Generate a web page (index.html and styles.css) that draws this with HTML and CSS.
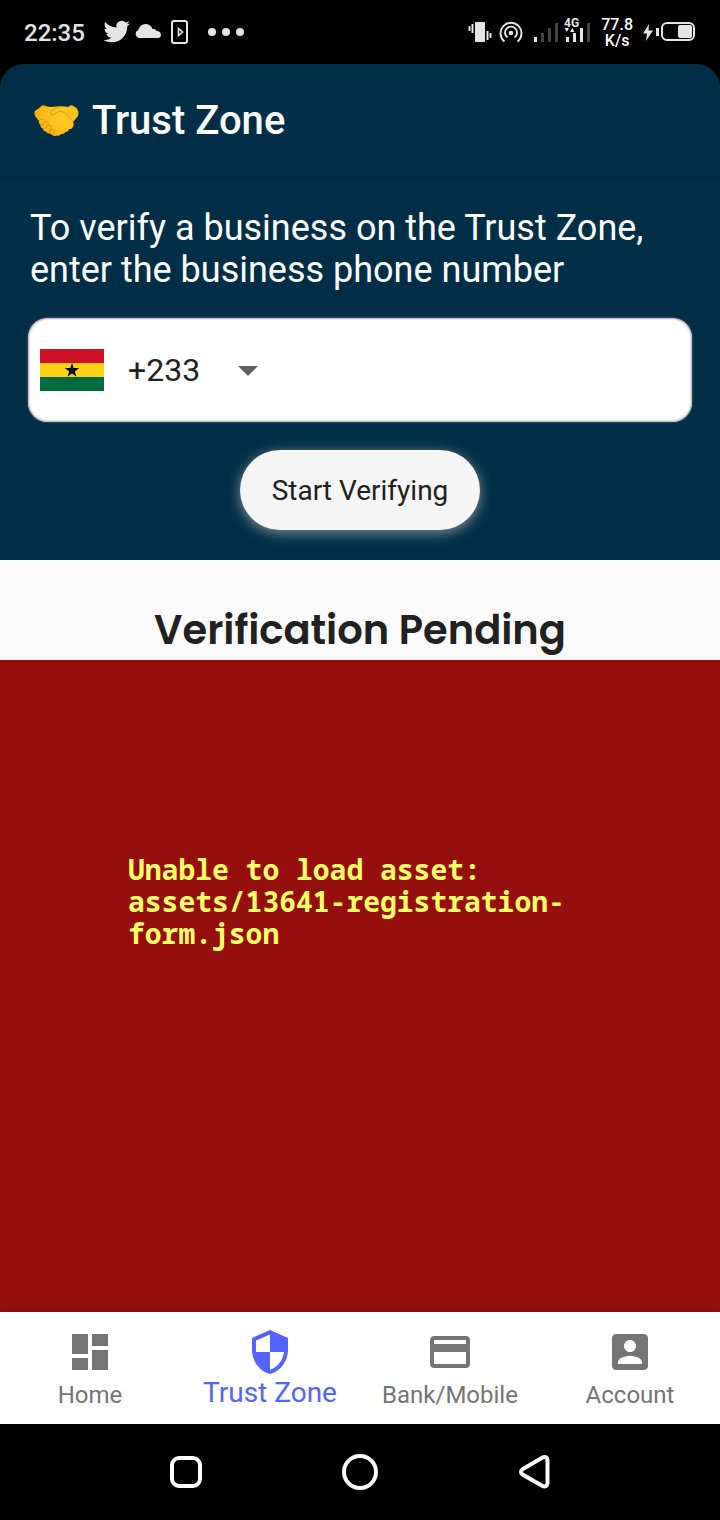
FILE: index.html
```html
<!DOCTYPE html>
<html lang="en">
<head>
<meta charset="utf-8">
<meta name="viewport" content="width=device-width, initial-scale=1">
<title>Trust Zone</title>
<link rel="stylesheet" href="styles.css">
</head>
<body>
<div class="screen">
  <div class="status">
    <div class="status-left">
      <span class="clock">22:35</span>
      <svg width="142" height="28" viewBox="103 18 142 28" fill="#e4e4e4" aria-hidden="true">
        <path transform="translate(103.500 18.400) scale(1.100)" d="M23.950 4.570a10 10 0 0 1-2.820.77 4.960 4.960 0 0 0 2.160-2.720c-.95.550-2 .960-3.130 1.180a4.920 4.920 0 0 0-8.380 4.480C7.690 8.090 4.070 6.130 1.640 3.160a4.820 4.820 0 0 0-.67 2.480c0 1.710.870 3.210 2.190 4.100a4.900 4.900 0 0 1-2.230-.62v.06a4.920 4.920 0 0 0 3.950 4.830 5 5 0 0 1-2.210.080 4.940 4.940 0 0 0 4.600 3.420A9.870 9.870 0 0 1 0 19.540a14 14 0 0 0 7.550 2.210c9.050 0 14-7.500 14-13.980 0-.21 0-.42-.02-.63a9.940 9.940 0 0 0 2.460-2.550z"/>
        <path d="M138.500 38a4.300 4.300 0 0 1-.3-8C139.500 26 142 24 145.500 24c3.500 0 6 2.300 7 5 1.400-.4 3.200.2 3.900 1.700 2.600.2 4.600 1.800 4.600 4 0 2-1.400 3.300-3.200 3.300z"/>
        <rect x="172" y="21" width="15" height="22" rx="2" fill="none" stroke="#e4e4e4" stroke-width="2"/>
        <path d="M178.500 28.500v7l4-3.500z" fill="none" stroke="#e4e4e4" stroke-width="1.600"/>
        <circle cx="212" cy="32" r="4"/><circle cx="226" cy="32" r="4"/><circle cx="240" cy="32" r="4"/>
      </svg>
    </div>
    <div class="status-right">
      <svg width="124" height="32" viewBox="469 16 124 32" aria-hidden="true">
        <g fill="#e4e4e4">
          <rect x="476" y="22" width="10" height="20" rx="1"/>
          <rect x="472.500" y="24" width="2" height="9"/><rect x="469.500" y="26" width="2" height="5"/>
          <rect x="487.500" y="31" width="2" height="9"/><rect x="490.500" y="33" width="2" height="5"/>
          <circle cx="512" cy="33" r="2.300"/>
          <rect x="535" y="37" width="3" height="5"/>
          <rect x="567" y="37" width="3" height="5"/><rect x="574" y="33" width="3" height="9"/><rect x="581" y="28" width="3" height="14"/>
          <path d="M565.500 28h4.500l-2.200 4zM571 32h4.500l-2.200-4z"/>
        </g>
        <g fill="none" stroke="#e4e4e4" stroke-width="1.900">
          <path d="M505.500 41.500a10.500 10.500 0 1 1 13 0M508.500 37.500a6 6 0 1 1 7 0"/>
        </g>
        <g fill="#444"><rect x="542" y="33" width="3" height="9"/><rect x="549" y="28" width="3" height="14"/><rect x="556" y="23" width="3" height="19"/><rect x="588" y="23" width="3" height="19"/></g>
        <text class="network" x="565" y="27">4G</text>
      </svg>
      <span class="speed">77.8<br>K/s</span>
      <svg width="54" height="22" viewBox="642 21 54 22" fill="#e4e4e4" aria-hidden="true">
        <path d="M649 24l-6 9.500h4l-1 7.500 7-10.500h-4.500z"/>
        <path d="M656 28h3v8h-3z"/>
        <rect x="662" y="23" width="32" height="17" rx="5" fill="none" stroke="#e4e4e4" stroke-width="2"/>
        <rect x="678" y="25" width="14" height="13" rx="2"/>
      </svg>
    </div>
  </div>

  <header class="appbar">
    <svg class="shake" width="46" height="34" viewBox="0 0 46 34" aria-hidden="true">
      <defs><radialGradient id="skin" cx=".65" cy=".4" r=".7"><stop offset="0" stop-color="#ffca28"/><stop offset=".6" stop-color="#ffc01d"/><stop offset="1" stop-color="#f9a80c"/></radialGradient></defs>
      <path fill="url(#skin)" d="M4.500 4.500 8 1.500Q10 .8 11.500 2q5 1.500 10.500.500 6-.8 12.500.500Q36 .8 38.500 1.500q3.500 1.500 5.500 5 1 3 0 5.500l-5 6q1.500 3.500-.5 5.500-1 2-3.500 1.500-.5 3-3.500 3-1 2.500-4.500 2-1.500 2.500-4.500 1.500-2 1.500-4.500-.5l-2-1.500q-3 .5-4-2-3 0-3-3-3-.500-2.500-3.500-2-1.500-1.500-4L1 12Q-.5 8 1.500 6.500z"/>
      <path fill="none" stroke="#dc9208" stroke-width=".9" stroke-linecap="round" stroke-linejoin="round" d="M24 3.200q-5 1.300-8 5.300.2 2.800 3.500 2 3-1.500 6-3.500 4 .5 7 3.500l6.500 7M5 17q2-3 4.500-2 2 1.500 0 4l-2.500 2M8 21q3-4.500 5.500-3.500 2 1.500 0 4.500l-2 2M11.500 24.500q3-4 5-3 2 1.500 0 4.500l-1.500 2M16 28q2-3.500 4-2.500 1.500 1.500-.5 5"/>
    </svg>
    <h1 class="title">Trust Zone</h1>
  </header>

  <form class="verify">
    <label class="prompt" for="phone">To verify a business on the Trust Zone, enter the business phone number</label>
    <div class="field">
      <svg class="flag" width="64" height="42" viewBox="0 0 64 42" aria-hidden="true">
        <path fill="#ce1126" d="M0 0h64v14H0z"/><path fill="#fcd116" d="M0 14h64v14H0z"/><path fill="#006b3f" d="M0 28h64v14H0z"/>
        <path d="M32 14l1.700 5.100h5.500l-4.400 3.300 1.700 5.200-4.500-3.200-4.500 3.200 1.700-5.200-4.400-3.300h5.500z"/>
      </svg>
      <div class="code-wrap">
        <select class="code" aria-label="Country code"><option>+233</option></select>
        <svg class="caret" width="20" height="12" viewBox="0 0 20 12" aria-hidden="true"><path fill="#616161" d="M0 2h20L10 12z"/></svg>
      </div>
      <input class="phone" id="phone" type="tel">
    </div>
    <button class="start" type="button">Start Verifying</button>
  </form>

  <main class="pending">
    <h2 class="pending-title">Verification Pending</h2>
    <p class="error">Unable to load asset: assets/13641-registration-form.json</p>
  </main>

  <nav class="tabs">
    <a class="tab" href="#home">
      <svg width="48" height="48" viewBox="0 0 24 24" aria-hidden="true"><path d="M3 13h8V3H3v10zm0 8h8v-6H3v6zm10 0h8V11h-8v10zm0-18v6h8V3h-8z"/></svg>
      <span>Home</span>
    </a>
    <a class="tab active" href="#trust" aria-current="page">
      <svg width="48" height="48" viewBox="0 0 24 24" aria-hidden="true"><path d="M12 1L3 5v6c0 5.550 3.840 10.740 9 12 5.160-1.260 9-6.450 9-12V5l-9-4zm0 10.990h7c-.53 4.120-3.280 7.790-7 8.940V12H5V6.300l7-3.110v8.800z"/></svg>
      <span>Trust Zone</span>
    </a>
    <a class="tab" href="#bank">
      <svg width="48" height="48" viewBox="0 0 24 24" aria-hidden="true"><path d="M20 4H4c-1.110 0-1.990.890-1.990 2L2 18c0 1.110.890 2 2 2h16c1.110 0 2-.89 2-2V6c0-1.110-.89-2-2-2zm0 14H4v-6h16v6zm0-10H4V6h16v2z"/></svg>
      <span>Bank/Mobile</span>
    </a>
    <a class="tab" href="#account">
      <svg width="48" height="48" viewBox="0 0 24 24" aria-hidden="true"><path d="M3 5v14c0 1.100.890 2 2 2h14c1.100 0 2-.9 2-2V5c0-1.100-.9-2-2-2H5c-1.110 0-2 .9-2 2zm12 4c0 1.660-1.340 3-3 3s-3-1.340-3-3 1.340-3 3-3 3 1.340 3 3zm-9 8c0-2 4-3.100 6-3.100s6 1.100 6 3.100v1H6v-1z"/></svg>
      <span>Account</span>
    </a>
  </nav>

  <div class="sysnav">
    <button class="sys" type="button" aria-label="Recent apps"><svg width="40" height="40" viewBox="0 0 40 40"><rect x="6" y="6" width="28" height="28" rx="7"/></svg></button>
    <button class="sys" type="button" aria-label="Home screen"><svg width="40" height="40" viewBox="0 0 40 40"><circle cx="20" cy="20" r="16"/></svg></button>
    <button class="sys" type="button" aria-label="Back"><svg width="40" height="40" viewBox="0 0 40 40"><path d="M8.500 17.300 L28.500 5.500 Q33 4 33.500 8 V31 Q33 35.500 28.500 34 L8.500 22.500 Q5.500 19.900 8.500 17.300z"/></svg></button>
  </div>
</div>
</body>
</html>
```
FILE: styles.css
```css
* { box-sizing: border-box; }

body {
  margin: 0;
  background: #000;
  color: #212121;
  font-family: Roboto, "Liberation Sans", sans-serif;
}

h1, h2, p { margin: 0; }
svg { display: block; flex: none; }

.screen {
  display: flex;
  flex-direction: column;
  min-height: 100vh;
}

.status {
  display: flex;
  align-items: center;
  justify-content: space-between;
  height: 64px;
  padding: 0 24px;
  color: #e4e4e4;
  font-weight: 500;
}
.status-left { display: flex; align-items: center; gap: 18px; }
.status-right { display: flex; align-items: center; gap: 9px; }
.clock { padding-top: 2px; font-size: 24px; line-height: 32px; }
.speed { padding-top: 2px; font-size: 16px; line-height: 16px; text-align: center; color: #fff; }
.network { font: 700 12px Roboto, sans-serif; fill: #e4e4e4; }

.appbar {
  position: relative;
  display: flex;
  align-items: center;
  gap: 12px;
  height: 112px;
  padding: 2px 34px 0;
  border-radius: 24px 24px 0 0;
  background: #002e47;
  color: #fff;
  box-shadow: 0 2px 4px rgba(0, 0, 0, .2);
}
.title { font-size: 40px; line-height: 48px; font-weight: 500; }

.verify {
  display: flex;
  flex-direction: column;
  gap: 28px;
  padding: 30px 28px;
  background: #002e47;
}
.prompt {
  margin-bottom: -1px;
  padding: 1px 2px 0;
  color: #fff;
  font-size: 36px;
  line-height: 42px;
}
.field {
  display: flex;
  align-items: center;
  gap: 24px;
  height: 104px;
  padding: 0 12px;
  border-radius: 20px;
  background: #fff;
  box-shadow: 0 0 2px #8a979f, inset 0 0 2px 1px #aaa;
}
.code-wrap {
  display: grid;
  grid-template-columns: 130px;
  align-items: center;
}
.code, .caret { grid-area: 1 / 1; }
.caret { justify-self: end; pointer-events: none; }
.code {
  appearance: none;
  width: 100%;
  padding: 0;
  border: 0;
  background: transparent;
  color: #212121;
  font: 32px/40px Roboto, sans-serif;
}
.phone {
  flex: 1;
  min-width: 0;
  border: 0;
  outline: 0;
  background: transparent;
  color: #212121;
  font: 32px/40px Roboto, sans-serif;
}
.start {
  align-self: center;
  width: 240px;
  height: 80px;
  padding: 2px 0 0;
  border: 0;
  border-radius: 40px;
  background: #f5f5f5;
  box-shadow: 0 3px 14px rgba(255, 240, 225, .5);
  color: #212121;
  font: 28px/32px Roboto, sans-serif;
}

.pending {
  display: flex;
  flex: 1;
  flex-direction: column;
  background: #fafafa;
}
.pending-title {
  padding: 40px 0 0;
  font-family: Poppins, Inter, sans-serif;
  font-size: 40px;
  line-height: 60px;
  font-weight: 600;
  text-align: center;
}
.error {
  flex: 1;
  padding: 193px 128px;
  background: #960f0f;
  color: #ff6;
  font: 700 28px/32px "Droid Sans Mono", "Noto Sans Mono", "DejaVu Sans Mono", monospace;
}

.tabs {
  display: grid;
  grid-template-columns: repeat(4, 1fr);
  position: relative;
  height: 112px;
  background: #fff;
  box-shadow: 0 -1px 8px rgba(0, 0, 0, .2);
}
.tab {
  display: flex;
  flex-direction: column;
  align-items: center;
  padding-top: 16px;
  color: #757575;
  fill: #757575;
  font-size: 24px;
  line-height: 38px;
  text-decoration: none;
}
.active {
  color: #5263ff;
  fill: #5263ff;
  font-size: 28px;
  line-height: 34px;
}

.sysnav {
  display: flex;
  align-items: center;
  justify-content: center;
  gap: 134px;
  height: 96px;
}
.sys {
  padding: 0;
  border: 0;
  background: none;
  fill: none;
  stroke: #fff;
  stroke-width: 4;
}
```
